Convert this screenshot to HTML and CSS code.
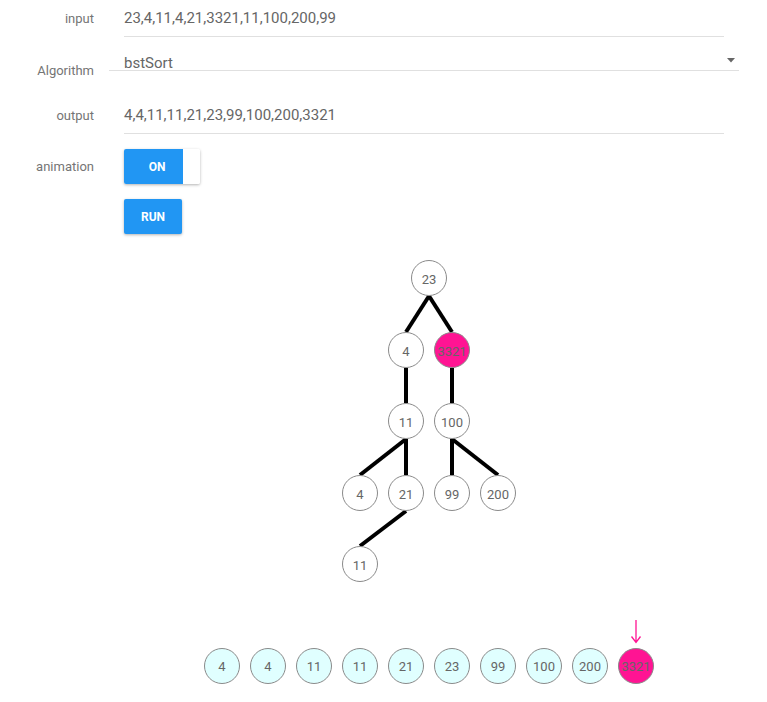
FILE: index.html
```html
<!DOCTYPE html>
<html>
<head>
<meta charset="utf-8">
<link rel="stylesheet" href="styles.css">
</head>
<body>
<div class="form">
  <div class="row row-input">
    <div class="label">input</div>
    <div class="field">23,4,11,4,21,3321,11,100,200,99</div>
  </div>
  <div class="row row-select">
    <div class="label label-select">Algorithm</div>
    <div class="select">
      <span class="select-text">bstSort</span>
      <svg class="caret" width="8" height="5" viewBox="0 0 8 5"><path d="M0 0h8L4 4.5z" fill="#666"/></svg>
    </div>
  </div>
  <div class="row row-input">
    <div class="label">output</div>
    <div class="field">4,4,11,11,21,23,99,100,200,3321</div>
  </div>
  <div class="row row-toggle">
    <div class="label label-btn">animation</div>
    <div class="toggle"><span class="toggle-on">ON</span><span class="knob"></span></div>
  </div>
  <div class="row row-run">
    <div class="label"></div>
    <button class="run">RUN</button>
  </div>
</div>

<svg class="tree" width="767" height="371" viewBox="0 250 767 371">
  <g class="edges">
    <line x1="429" y1="297" x2="406" y2="333"/>
    <line x1="429" y1="297" x2="452" y2="333"/>
    <line x1="406" y1="369" x2="406" y2="404"/>
    <line x1="452" y1="369" x2="452" y2="404"/>
    <line x1="406" y1="440" x2="360" y2="476"/>
    <line x1="406" y1="440" x2="406" y2="476"/>
    <line x1="452" y1="440" x2="452" y2="476"/>
    <line x1="452" y1="440" x2="498" y2="476"/>
    <line x1="406" y1="512" x2="360" y2="547"/>
  </g>
  <g class="nodes">
    <circle cx="429" cy="279" r="17.5"/><text x="429" y="280">23</text>
    <circle cx="406" cy="351" r="17.5"/><text x="406" y="352">4</text>
    <circle class="hl" cx="452" cy="351" r="17.5"/><text x="452" y="352">3321</text>
    <circle cx="406" cy="422" r="17.5"/><text x="406" y="423">11</text>
    <circle cx="452" cy="422" r="17.5"/><text x="452" y="423">100</text>
    <circle cx="360" cy="494" r="17.5"/><text x="360" y="495">4</text>
    <circle cx="406" cy="494" r="17.5"/><text x="406" y="495">21</text>
    <circle cx="452" cy="494" r="17.5"/><text x="452" y="495">99</text>
    <circle cx="498" cy="494" r="17.5"/><text x="498" y="495">200</text>
    <circle cx="360" cy="565" r="17.5"/><text x="360" y="566">11</text>
  </g>
</svg>

<div class="array">
  <div class="cell"><div class="slot"></div><div class="ball">4</div></div>
  <div class="cell"><div class="slot"></div><div class="ball">4</div></div>
  <div class="cell"><div class="slot"></div><div class="ball">11</div></div>
  <div class="cell"><div class="slot"></div><div class="ball">11</div></div>
  <div class="cell"><div class="slot"></div><div class="ball">21</div></div>
  <div class="cell"><div class="slot"></div><div class="ball">23</div></div>
  <div class="cell"><div class="slot"></div><div class="ball">99</div></div>
  <div class="cell"><div class="slot"></div><div class="ball">100</div></div>
  <div class="cell"><div class="slot"></div><div class="ball">200</div></div>
  <div class="cell"><div class="slot"><svg width="12" height="24" viewBox="0 0 12 24"><path d="M6 0v22M1.5 16.5L6 22.5l4.5-6" fill="none" stroke="#ff1493" stroke-width="1.3"/></svg></div><div class="ball ball-hl">3321</div></div>
</div>
</body>
</html>
```
FILE: styles.css
```css
html, body {
  margin: 0;
  padding: 0;
  background: #fff;
  font-family: Roboto, "Liberation Sans", sans-serif;
}
.form {
  display: flex;
  flex-direction: column;
}
.row {
  display: flex;
}
.label {
  width: 94px;
  margin-right: 30px;
  text-align: right;
  font-size: 13px;
  color: #757575;
  line-height: 37px;
  flex: none;
}
.row-input {
  height: 37px;
}
.field {
  width: 600px;
  height: 36px;
  line-height: 37px;
  border-bottom: 1px solid #e0e0e0;
  font-size: 15px;
  color: #666;
}
.row-select {
  height: 60px;
}
.label-select {
  margin-top: 24px;
  line-height: 20px;
  height: 20px;
  margin-right: 15px;
}
.select {
  margin-top: 17px;
  width: 615px;
  height: 16px;
  border-bottom: 1px solid #e0e0e0;
  display: flex;
  align-items: center;
  justify-content: space-between;
  padding-left: 15px;
  box-sizing: content-box;
}
.select-text {
  font-size: 15px;
  color: #666;
  line-height: 16px;
  margin-top: 2px;
}
.caret {
  margin-right: 4px;
  margin-top: -4px;
}
.row-toggle {
  margin-top: 15px;
  height: 35px;
}
.label-btn {
  line-height: 36px;
}
.toggle {
  width: 76px;
  height: 35px;
  display: flex;
  border-radius: 2px;
  overflow: hidden;
  box-shadow: 0 1px 3px rgba(0,0,0,0.3);
}
.toggle-on {
  width: 59px;
  padding-left: 7px;
  box-sizing: border-box;
  background: #2196f3;
  color: #fff;
  font-size: 12px;
  font-weight: 700;
  display: flex;
  align-items: center;
  justify-content: center;
}
.knob {
  flex: 1;
  background: #fff;
}
.row-run {
  margin-top: 15px;
  height: 35px;
}
.run {
  width: 58px;
  height: 35px;
  background: #2196f3;
  color: #fff;
  border: none;
  border-radius: 2px;
  font-family: Roboto, "Liberation Sans", sans-serif;
  font-size: 12px;
  font-weight: 700;
  padding: 0;
  box-shadow: 0 1px 3px rgba(0,0,0,0.3);
}
.tree {
  display: block;
  margin-top: 15px;
}
.edges line {
  stroke: #000;
  stroke-width: 4;
}
.nodes circle {
  fill: #fff;
  stroke: #8a8a8a;
  stroke-width: 1;
}
.nodes circle.hl {
  fill: #ff1493;
}
.nodes text {
  font-family: Roboto, "Liberation Sans", sans-serif;
  font-size: 13px;
  fill: #666;
  text-anchor: middle;
  dominant-baseline: central;
}
.array {
  display: flex;
  gap: 10px;
  margin-left: 204px;
}
.cell {
  display: flex;
  flex-direction: column;
  align-items: center;
  width: 36px;
}
.slot {
  height: 28px;
  display: flex;
  align-items: flex-start;
  justify-content: center;
}
.ball {
  width: 34px;
  height: 34px;
  border-radius: 50%;
  border: 1px solid #8a8a8a;
  background: #e0ffff;
  font-size: 13px;
  color: #666;
  display: flex;
  align-items: center;
  justify-content: center;
  padding-top: 1px;
  box-sizing: content-box;
  height: 33px;
}
.ball-hl {
  background: #ff1493;
}
```
